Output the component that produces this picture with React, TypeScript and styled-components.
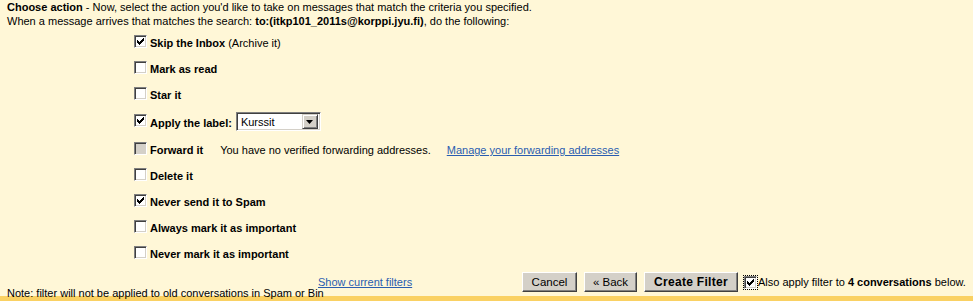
import React from "react";
import styled, { createGlobalStyle } from "styled-components";

const Global = createGlobalStyle`
  html, body { margin: 0; padding: 0; background: #fff7d7; }
  body { font-family: "Liberation Sans", Arial, sans-serif; font-size: 11px; color: #000; }
`;

const Page = styled.div`
  width: 973px;
  height: 301px;
  background: #fff7d7;
  display: flex;
  flex-direction: column;
  overflow: hidden;
  font-family: "Liberation Sans", Arial, sans-serif;
  font-size: 11px;
`;

const Header = styled.div`
  padding: 0 0 0 7px;
  line-height: 14px;
  height: 30px;
`;

const Line = styled.div`
  white-space: nowrap;
`;

const Options = styled.div`
  display: flex;
  flex-direction: column;
  padding-left: 134px;
`;

const Row = styled.div<{ $tall?: boolean }>`
  display: flex;
  align-items: center;
  height: ${(p) => (p.$tall ? 29 : 26)}px;
  white-space: nowrap;
`;

const Label = styled.span`
  font-weight: bold;
  margin-left: 3px;
`;

const Aside = styled.span<{ $gap: number }>`
  margin-left: ${(p) => p.$gap}px;
`;

const Link = styled.a`
  color: #2a5db0;
  text-decoration: underline;
  cursor: pointer;
`;

const Box = styled.span<{ $disabled?: boolean; $focus?: boolean; $lift?: number }>`
  box-sizing: border-box;
  width: 13px;
  height: 13px;
  flex: none;
  display: inline-flex;
  align-items: center;
  justify-content: center;
  position: relative;
  top: ${(p) => -(p.$lift ?? 2)}px;
  background: ${(p) => (p.$disabled ? "#d4d0c8" : "#fff")};
  border-style: solid;
  border-width: 1px;
  border-color: #808080 #fff #fff #808080;
  box-shadow: inset 1px 1px 0 #404040, inset -1px -1px 0 #d4d0c8;
  outline: ${(p) => (p.$focus ? "1px dotted #000" : "none")};
  outline-offset: 0px;
`;

const Check = () => (
  <svg width="7" height="7" viewBox="0 0 7 7" style={{ display: "block" }}>
    <path d="M0 2h1v1h1v1h1V3h1V2h1V1h1V0h1v3H6v1H5v1H4v1H3v1H2V6H1V5H0z" fill="#000" />
  </svg>
);

const CheckBox = ({
  checked,
  disabled,
  focus,
  lift,
}: {
  checked?: boolean;
  disabled?: boolean;
  focus?: boolean;
  lift?: number;
}) => (
  <Box $disabled={disabled} $focus={focus} $lift={lift}>
    {checked ? <Check /> : null}
  </Box>
);

const Select = styled.span`
  box-sizing: border-box;
  margin-left: 4px;
  width: 85px;
  height: 19px;
  display: inline-flex;
  align-items: center;
  justify-content: space-between;
  background: #fff;
  border-style: solid;
  border-width: 1px;
  border-color: #808080 #fff #fff #808080;
  box-shadow: inset 1px 1px 0 #404040, inset -1px -1px 0 #d4d0c8;
  padding: 2px 2px 2px 4px;
  font-weight: normal;
  position: relative;
  top: -1px;
`;

const SelectArrow = styled.span`
  box-sizing: border-box;
  width: 16px;
  height: 15px;
  background: #d4d0c8;
  border-style: solid;
  border-width: 1px;
  border-color: #d4d0c8 #404040 #404040 #d4d0c8;
  box-shadow: inset 1px 1px 0 #fff, inset -1px -1px 0 #808080;
  display: inline-flex;
  align-items: center;
  justify-content: center;
`;

const Footer = styled.div`
  display: grid;
  grid-template-columns: 311px 204px auto;
  align-items: center;
  padding: 5px 0 0 7px;
  height: 20px;
`;

const Note = styled.span`
  align-self: end;
  white-space: nowrap;
  line-height: 13px;
  position: relative;
  top: 8px;
`;

const FooterLink = styled.div`
  line-height: 13px;
`;

const Actions = styled.div`
  display: flex;
  align-items: center;
  white-space: nowrap;
`;

const Button = styled.button<{ $w: number; $bold?: boolean; $gap?: number }>`
  box-sizing: border-box;
  width: ${(p) => p.$w}px;
  height: 20px;
  margin-right: ${(p) => p.$gap ?? 7}px;
  padding: 0;
  font-family: "Liberation Sans", Arial, sans-serif;
  font-size: ${(p) => (p.$bold ? 12 : 11.5)}px;
  letter-spacing: ${(p) => (p.$bold ? 0.3 : 0)}px;
  font-weight: ${(p) => (p.$bold ? "bold" : "normal")};
  color: #000;
  background: #d4d0c8;
  border-style: solid;
  border-width: 1px;
  border-color: #fff #404040 #404040 #fff;
  box-shadow: inset -1px -1px 0 #808080, inset 1px 1px 0 #d4d0c8;
`;

const AlsoText = styled.span`
  margin-left: 1px;
`;

const Stripe = styled.div`
  margin-top: auto;
  height: 5px;
  background: #fad163;
`;

export default function App() {
  return (
    <Page>
      <Global />
      <Header>
        <Line>
          <b>Choose action</b> - Now, select the action you'd like to take on messages that match the criteria you specified.
        </Line>
        <Line>
          When a message arrives that matches the search: <b>to:(itkp101_2011s@korppi.jyu.fi)</b>, do the following:
        </Line>
      </Header>
      <Options>
        <Row>
          <CheckBox checked />
          <Label>Skip the Inbox</Label>
          <Aside $gap={3}>(Archive it)</Aside>
        </Row>
        <Row>
          <CheckBox />
          <Label>Mark as read</Label>
        </Row>
        <Row>
          <CheckBox />
          <Label>Star it</Label>
        </Row>
        <Row $tall>
          <CheckBox checked />
          <Label>Apply the label:</Label>
          <Select>
            <span>Kurssit</span>
            <SelectArrow>
              <svg width="7" height="4" viewBox="0 0 7 4" style={{ display: "block" }}>
                <path d="M0 0h7L3.5 4z" fill="#000" />
              </svg>
            </SelectArrow>
          </Select>
        </Row>
        <Row>
          <CheckBox disabled />
          <Label>Forward it</Label>
          <Aside $gap={17}>You have no verified forwarding addresses.</Aside>
          <Aside $gap={16}>
            <Link>Manage your forwarding addresses</Link>
          </Aside>
        </Row>
        <Row>
          <CheckBox />
          <Label>Delete it</Label>
        </Row>
        <Row>
          <CheckBox checked />
          <Label>Never send it to Spam</Label>
        </Row>
        <Row>
          <CheckBox />
          <Label>Always mark it as important</Label>
        </Row>
        <Row>
          <CheckBox />
          <Label>Never mark it as important</Label>
        </Row>
      </Options>
      <Footer>
        <Note>Note: filter will not be applied to old conversations in Spam or Bin</Note>
        <FooterLink>
          <Link>Show current filters</Link>
        </FooterLink>
        <Actions>
          <Button $w={55}>Cancel</Button>
          <Button $w={53}>« Back</Button>
          <Button $w={94} $bold $gap={6}>Create Filter</Button>
          <CheckBox checked focus lift={0} />
          <AlsoText>
            Also apply filter to <b>4 conversations</b> below.
          </AlsoText>
        </Actions>
      </Footer>
      <Stripe />
    </Page>
  );
}
